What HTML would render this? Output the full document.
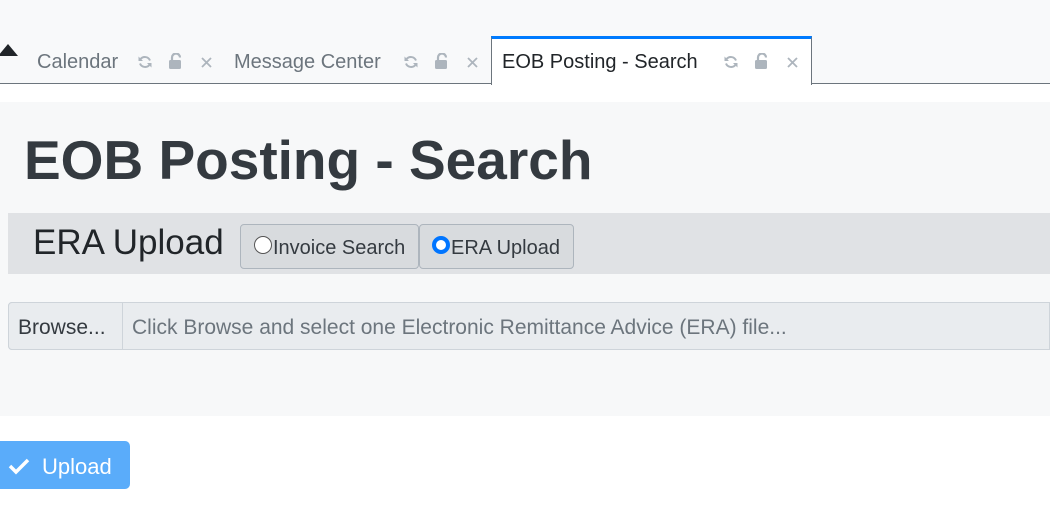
<!DOCTYPE html>
<html><head><style>
*{margin:0;padding:0;box-sizing:border-box}
body{width:1050px;height:525px;overflow:hidden;background:#fff;font-family:"Liberation Sans",sans-serif;position:relative;color:#212529}
.a{position:absolute;white-space:nowrap}
.top{left:0;top:0;width:1050px;height:84px;background:#f8f9fa;border-bottom:1px solid #6c757d}
.tab{font-size:20px;color:#6c757d;top:51px}
</style></head><body>
<svg width="0" height="0" style="position:absolute">
<defs>
<g id="rf"><path d="M13 6.5A5.5 5.5 0 0 0 3.3 5.5M3 9.5A5.5 5.5 0 0 0 12.7 10.5" stroke="#adb5bd" stroke-width="2" fill="none"/><path d="M1.5 2.5V7H6z M14.5 13.5V9H10z" fill="#adb5bd"/></g>
<g id="lk"><path d="M4 7V4.5a4 4 0 0 1 8 0" stroke="#adb5bd" stroke-width="2.2" fill="none"/><rect x="1" y="7" width="12" height="9" rx="1.5" fill="#adb5bd"/></g>
<g id="cx"><path d="M2 2L11 11M11 2L2 11" stroke="#adb5bd" stroke-width="1.8"/></g>
</defs></svg>
<div class="a top"></div>
<div class="a" style="left:-2px;top:44px;width:0;height:0;border-left:10px solid transparent;border-right:10px solid transparent;border-bottom:12px solid #212529"></div>
<div class="a tab" style="left:37px">Calendar</div>
<svg class="a" style="left:137px;top:54px" width="16" height="16"><use href="#rf"/></svg>
<svg class="a" style="left:168px;top:53px" width="16" height="17"><use href="#lk"/></svg>
<svg class="a" style="left:200px;top:56px" width="13" height="13"><use href="#cx"/></svg>
<div class="a tab" style="left:234px">Message Center</div>
<svg class="a" style="left:403px;top:54px" width="16" height="16"><use href="#rf"/></svg>
<svg class="a" style="left:434px;top:53px" width="16" height="17"><use href="#lk"/></svg>
<svg class="a" style="left:466px;top:56px" width="13" height="13"><use href="#cx"/></svg>
<div class="a" style="left:491px;top:36px;width:321px;height:49px;background:#fff;border:1px solid #6c757d;border-top:3px solid #007bff;border-bottom:none"></div>
<div class="a tab" style="left:502px;color:#212529">EOB Posting - Search</div>
<svg class="a" style="left:723px;top:54px" width="16" height="16"><use href="#rf"/></svg>
<svg class="a" style="left:754px;top:53px" width="16" height="17"><use href="#lk"/></svg>
<svg class="a" style="left:786px;top:56px" width="13" height="13"><use href="#cx"/></svg>
<div class="a" style="left:0;top:102px;width:1050px;height:314px;background:#f7f8f9"></div>
<div class="a" style="left:24px;top:128px;font-size:55px;font-weight:bold;color:#343a40">EOB Posting - Search</div>
<div class="a" style="left:8px;top:213px;width:1042px;height:61px;background:#e0e2e5"></div>
<div class="a" style="left:33px;top:223px;font-size:35px;color:#212529">ERA Upload</div>
<div class="a" style="left:240px;top:224px;width:179px;height:45px;border:1px solid #adb5bd;border-radius:4px;background:#d8dbde"></div>
<div class="a" style="left:419px;top:224px;width:155px;height:45px;border:1px solid #adb5bd;border-radius:4px;background:#d8dbde"></div>
<div class="a" style="left:254px;top:236px;width:18px;height:18px;border:1px solid #555;border-radius:50%;background:#fff"></div>
<div class="a" style="left:273px;top:237px;font-size:20px;color:#343a40">Invoice Search</div>
<div class="a" style="left:432px;top:236px;width:18px;height:18px;border:4px solid #0075ff;border-radius:50%;background:#fff"></div>
<div class="a" style="left:451px;top:237px;font-size:20px;color:#343a40">ERA Upload</div>
<div class="a" style="left:8px;top:302px;width:1042px;height:48px;background:#e9ecef;border:1px solid #ced4da;border-radius:4px 0 0 4px"></div>
<div class="a" style="left:8px;top:302px;width:115px;height:48px;border:1px solid #ced4da;border-radius:4px 0 0 4px;background:#e9ecef"></div>
<div class="a" style="left:18px;top:316px;font-size:21px;color:#343a40">Browse...</div>
<div class="a" style="left:132px;top:316px;font-size:21px;color:#6c757d">Click Browse and select one Electronic Remittance Advice (ERA) file...</div>
<div class="a" style="left:0;top:441px;width:130px;height:48px;background:#5aacfa;border-radius:0 5px 5px 0"></div>
<svg class="a" style="left:7px;top:456px" width="24" height="20" viewBox="0 0 24 20"><path d="M3 10 L9 16 L21 4" stroke="#fff" stroke-width="3.5" fill="none"/></svg>
<div class="a" style="left:42px;top:454px;font-size:22px;color:#fff">Upload</div>
</body></html>
